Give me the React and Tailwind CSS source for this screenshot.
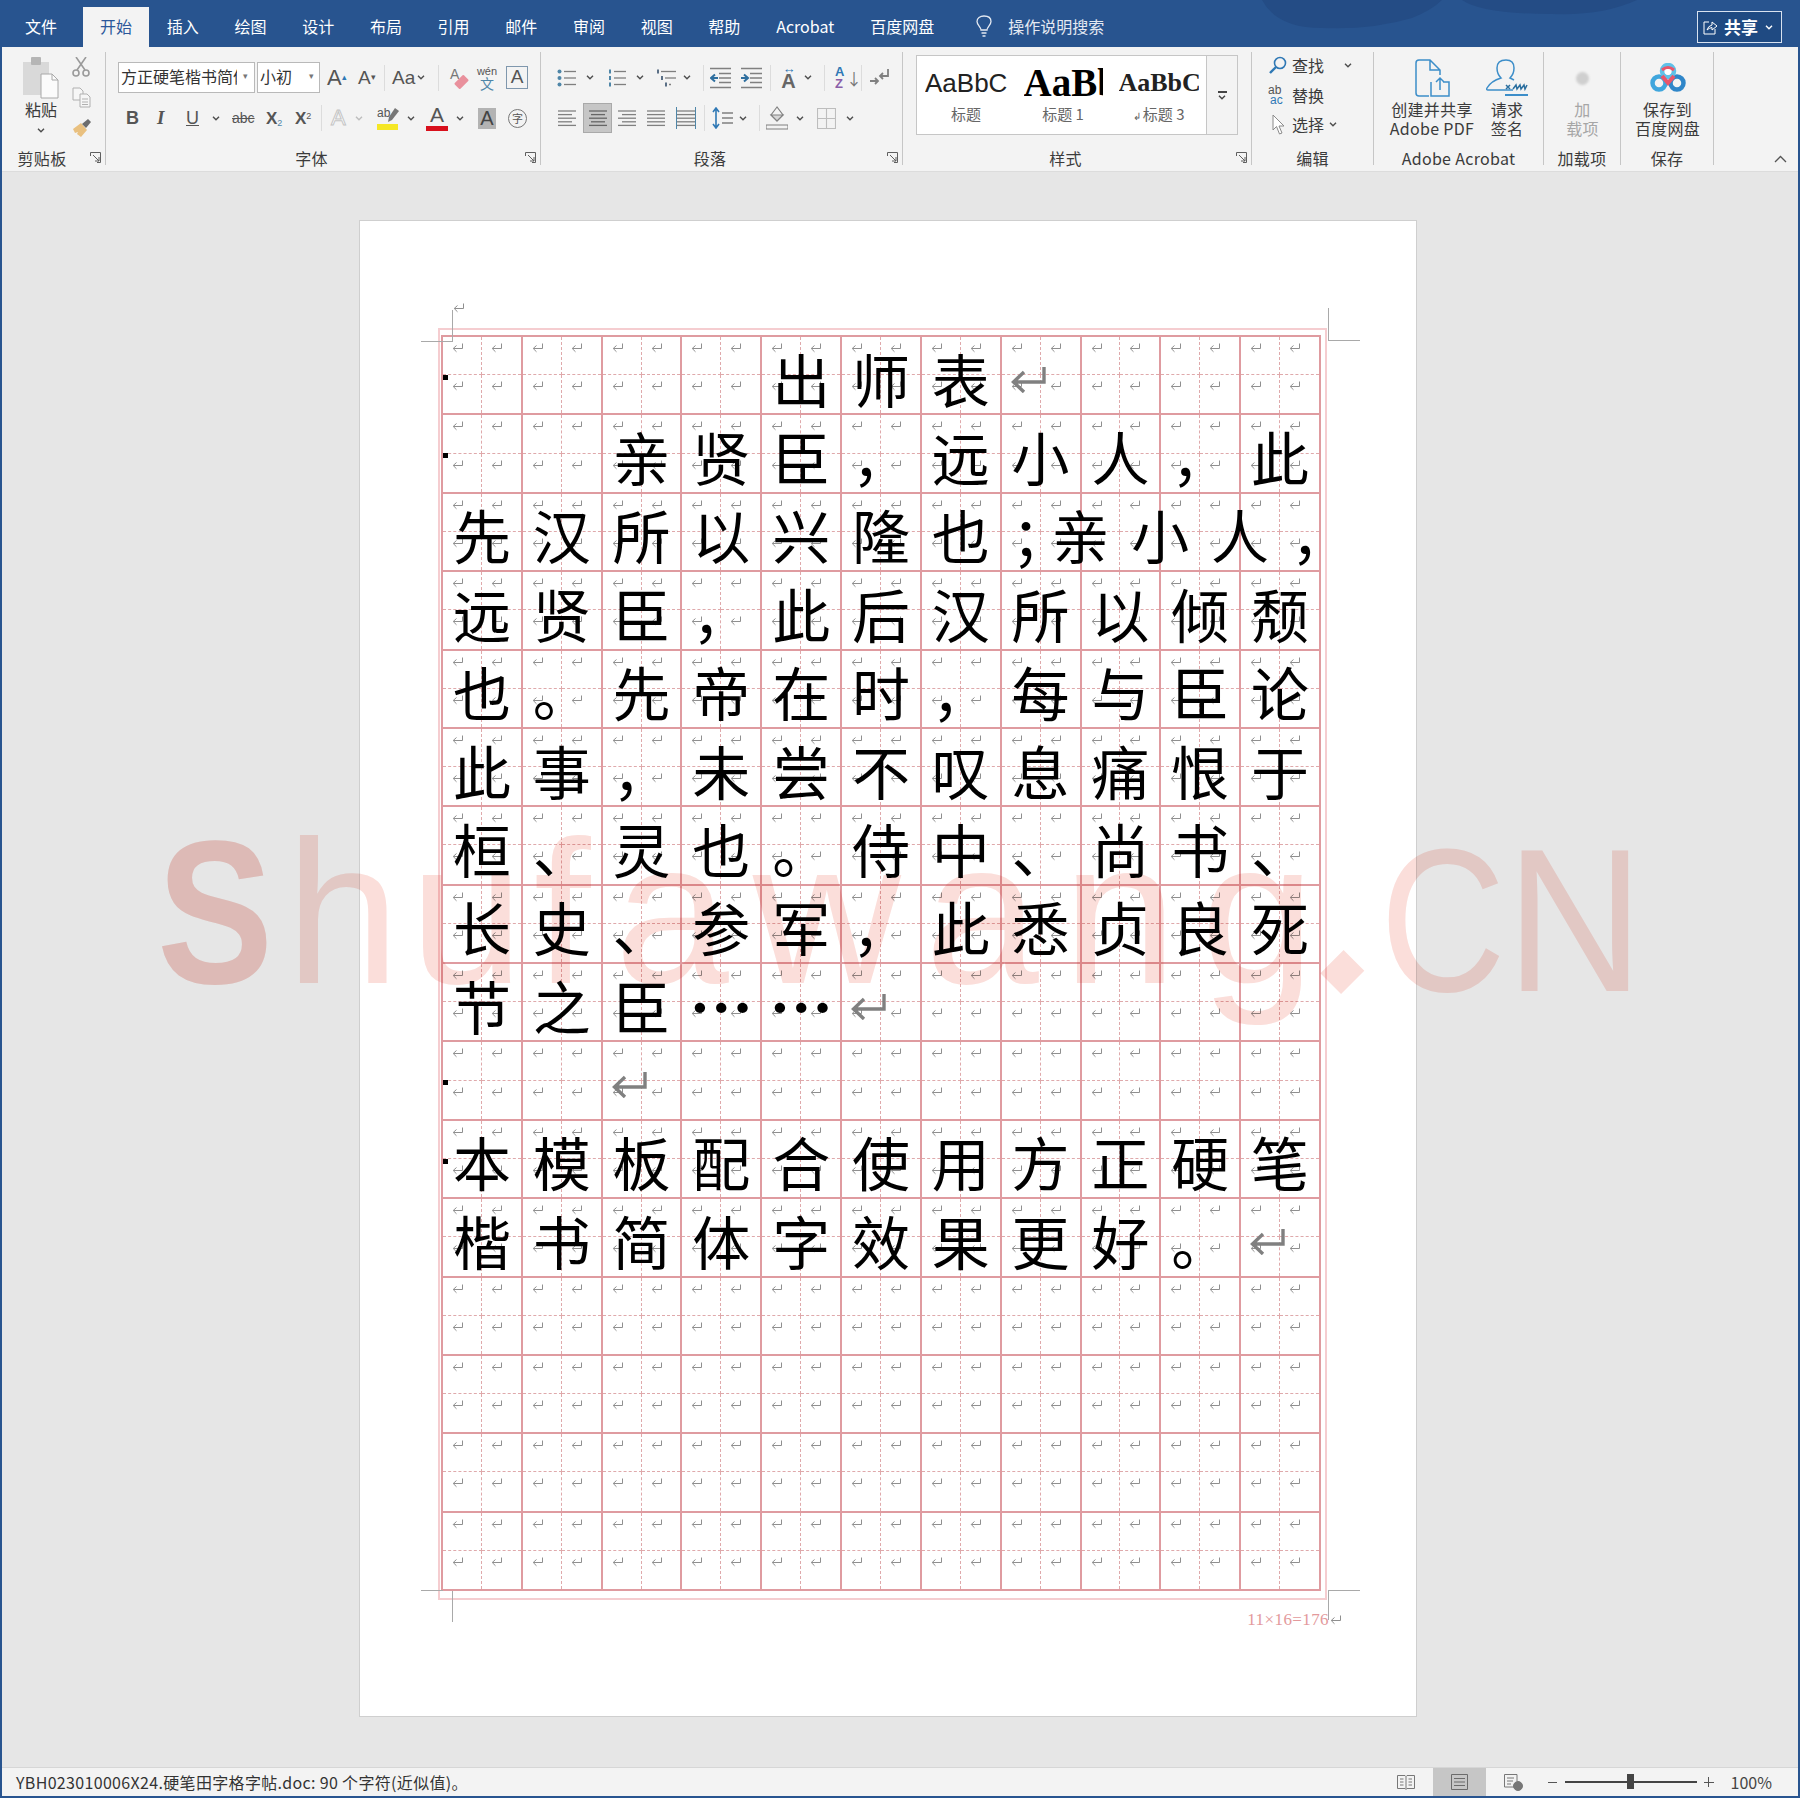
import React from "react";

const UI_FONT = "font-['Noto_Sans_CJK_SC','Noto_Sans',sans-serif]";

const TABS = [
   ["插入", "w-[67.7px]"],
   ["绘图", "w-[67.7px]"],
   ["设计", "w-[67.7px]"],
   ["布局", "w-[67.7px]"],
   ["引用", "w-[67.7px]"],
   ["邮件", "w-[67.7px]"],
   ["审阅", "w-[67.7px]"],
   ["视图", "w-[67.7px]"],
   ["帮助", "w-[67.7px]"],
   ["Acrobat", "w-[94px]"],
   ["百度网盘", "w-[100px]"],
];

const ROWS = [
   "    出师表↵   ",
   "  亲贤臣，远小人，此",
   "先汉所以兴隆也；亲小人",
   "远贤臣，此后汉所以倾颓",
   "也。先帝在时，每与臣论",
   "此事，未尝不叹息痛恨于",
   "桓、灵也。侍中、尚书、",
   "长史、参军，此悉贞良死",
   "节之臣……↵     ",
   "  ↵        ",
   "本模板配合使用方正硬笔",
   "楷书简体字效果更好。↵",
   "           ",
   "           ",
   "           ",
   "           ",
];

const MARKED_ROWS = [0, 1, 9, 10];

function Ret({ className = "" }) {
   return (
      <svg viewBox="0 0 12 10" className={`h-[10px] w-[12px] ${className}`} fill="none" stroke="#8f8f8f" strokeWidth="1">
         <path d="M10.5 .5V5.5H1.5M4.5 2.5 1.2 5.5 4.5 8.8" />
      </svg>
   );
}

function BigRet() {
   return (
      <svg viewBox="0 0 37 27" className="absolute left-[8px] top-[29px] z-20 h-[27px] w-[37px]" fill="none" stroke="#808080" strokeWidth="3.4">
         <path d="M34 1V16H4M14 6 3.5 16 14 26" />
      </svg>
   );
}

function Cell({ text, row, col }) {
   const shifted = row === 2 && col >= 8;
   return (
      <div className="relative grid grid-cols-2 grid-rows-2 border-r-2 border-b-2 border-[#df9ba0]">
         <div className="border-r border-b border-dashed border-[#dfa9ab] pl-[9px] pt-[6px]"><Ret /></div>
         <div className="border-b border-dashed border-[#dfa9ab] pl-[9px] pt-[6px]"><Ret /></div>
         <div className="border-r border-dashed border-[#dfa9ab] pl-[9px] pt-[6px]"><Ret /></div>
         <div className="pl-[9px] pt-[6px]"><Ret /></div>
         {col === 0 && MARKED_ROWS.includes(row) && <span className="absolute left-0 top-[38px] h-[5px] w-[5px] bg-black" />}
         {text === "↵" ? (
            <BigRet />
         ) : text === "…" ? (
            <span className="absolute inset-0 z-10 flex items-center justify-center pt-[4px] text-[64px] font-bold leading-none text-black">…</span>
         ) : text !== " " ? (
            <span className={`absolute inset-0 z-10 flex items-center justify-center pt-[5px] text-[58px] leading-none text-black ${shifted ? "-translate-x-10" : ""}`}>
               {text}
            </span>
         ) : null}
         {row === 2 && col === 10 && (
            <span className="absolute inset-0 z-10 flex translate-x-10 items-center justify-center pt-[5px] text-[58px] leading-none text-black">，</span>
         )}
      </div>
   );
}

function Chev({ className = "", color = "#4d4d4d" }) {
   return (
      <svg viewBox="0 0 8 5" className={`h-[5px] w-[8px] shrink-0 ${className}`} fill="none" stroke={color} strokeWidth="1.4">
         <path d="M1 .8 4 3.8 7 .8" />
      </svg>
   );
}

function Sep({ className = "" }) {
   return <span className={`h-[26px] w-px shrink-0 bg-[#dcdcdc] ${className}`} />;
}

function Launcher() {
   return (
      <svg viewBox="0 0 11 11" className="absolute right-[4px] top-[3px] h-[11px] w-[11px]" fill="none" stroke="#5f5f5f" strokeWidth="1">
         <path d="M.5 4V.5H10.5V10.5H7M3 3 9 9M9 5V9H5" />
      </svg>
   );
}

function Group({ label, launcher, width, children }) {
   return (
      <section className={`flex shrink-0 flex-col border-r border-[#c6c6c6] ${width}`}>
         <div className="h-[98px]">{children}</div>
         <div className={`relative h-[16px] text-center text-[16px] leading-[18px] tracking-[0.3px] text-[#3b3b3b] ${launcher ? "pr-[23px]" : ""}`}>
            {label}
            {launcher && <Launcher />}
         </div>
      </section>
   );
}

// align: 0 left, 1 center, 2 right, 3 both
function AlignLines({ align, className = "", color = "#808080" }) {
   const rows = [16, 12, 16, 12, 16];
   return (
      <svg viewBox="0 0 18 17" className={`h-[17px] w-[18px] shrink-0 ${className}`} stroke={color} strokeWidth="1.3">
         {rows.map((w, i) => {
            const len = align === 3 ? 18 : w + 2;
            const x = align === 0 || align === 3 ? 0 : align === 1 ? (18 - len) / 2 : 18 - len;
            return <line key={i} x1={x} x2={x + len} y1={1 + i * 3.6} y2={1 + i * 3.6} />;
         })}
      </svg>
   );
}

function ListIcon({ kind, className = "" }) {
   const ys = [2.5, 9, 15.5];
   return (
      <svg viewBox="0 0 20 18" className={`h-[18px] w-[20px] shrink-0 ${className}`}>
         {ys.map((y, i) => (
            <g key={y}>
               {kind === "bullet" && <circle cx="2.5" cy={y} r="2" fill="#4f86a8" />}
               {kind === "number" && <rect x="2" y={y - 2} width="2" height="4" fill="#4f86a8" />}
               {kind === "multi" && <rect x={i === 0 ? 0 : i === 1 ? 4 : 8} y={y - 2} width="2" height="4" fill="#5a6f86" />}
               <line x1={kind === "multi" ? 4 + i * 4 : 7} x2={kind === "multi" && i === 2 ? 14 : 19} y1={y} y2={y} stroke="#7f7f7f" strokeWidth="1.3" />
            </g>
         ))}
      </svg>
   );
}

function IndentIcon({ flip, className = "" }) {
   return (
      <svg viewBox="0 0 21 22" className={`h-[22px] w-[21px] shrink-0 ${className}`} stroke="#808080" strokeWidth="1.3" fill="none">
         <path d="M0 1.5H21M9 6.5H21M9 11H21M9 15.5H21M0 20.5H21" />
         <path d={flip ? "M0 11H6M3 7.5 7 11 3 14.5" : "M8 11H2M5 7.5 1 11 5 14.5"} stroke="#2f6f9f" strokeWidth="2" />
      </svg>
   );
}

function ClipboardIcon() {
   return (
      <svg viewBox="0 0 36 42" className="h-[42px] w-[36px]">
         <rect x="0" y="5" width="26" height="33" fill="#d9d9d9" />
         <rect x="8" y="0" width="10" height="8" rx="1" fill="#b5b5b5" />
         <path d="M18 17H29L35 23V41H18Z" fill="#fbfbfb" stroke="#a8a8a8" strokeWidth="1" />
         <path d="M29 17V23H35" fill="none" stroke="#a8a8a8" strokeWidth="1" />
      </svg>
   );
}

function CutIcon() {
   return (
      <svg viewBox="0 0 18 20" className="h-[20px] w-[18px]" fill="none" stroke="#9a9a9a" strokeWidth="1.6">
         <path d="M4 0 13 13M14 0 5 13" />
         <circle cx="4" cy="16" r="3" />
         <circle cx="14" cy="16" r="3" />
      </svg>
   );
}

function CopyIcon() {
   return (
      <svg viewBox="0 0 19 21" className="h-[21px] w-[19px]" fill="#f6f6f6" stroke="#b0b0b0" strokeWidth="1">
         <path d="M1 1H8L11 4V13H1Z" />
         <path d="M8 7H15L18 10V20H8Z" />
         <path d="M10 12H16M10 15H16M10 17.5H16" />
      </svg>
   );
}

function PainterIcon() {
   return (
      <svg viewBox="0 0 20 20" className="h-[20px] w-[20px]">
         <path d="M1 11 9 5 15 12 9 19 5 16 6 14 3 15Z" fill="#e9c07f" />
         <path d="M10 6 16 1 19 4 14 10Z" fill="#6d6d6d" />
      </svg>
   );
}

function FindIcon() {
   return (
      <svg viewBox="0 0 18 18" className="h-[18px] w-[18px]" fill="none" stroke="#2f78b5" strokeWidth="1.6">
         <circle cx="11" cy="7" r="5.5" />
         <path d="M7 11 1 17" strokeWidth="2.4" />
      </svg>
   );
}

function PdfIcon() {
   return (
      <svg viewBox="0 0 35 39" className="h-[39px] w-[35px]" fill="none" stroke="#3d8ec9" strokeWidth="1.5">
         <path d="M14 37H4Q1 37 1 34V4Q1 1 4 1H15L25 11V16M15 1V11H25" />
         <path d="M16 23V37H34V23H28M25 31V19M21 23 25 19 29 23" />
      </svg>
   );
}

function SignIcon() {
   return (
      <svg viewBox="0 0 42 38" className="h-[38px] w-[42px]" fill="none" stroke="#3d8ec9" strokeWidth="1.5">
         <path d="M27 31H2Q0 31 1 29 5 22 15 19 11 15 11 9 11 1 20 1 28 1 28 9 28 15 24 19 26 20 28 21" />
         <path d="M20 26 24 30M24 26 20 30" stroke="#2b6f9f" />
         <path d="M27 30 30 26 31 30 34 26 35 30 38 26 39 30 41 26" stroke="#2b6f9f" />
         <path d="M19 36H42" strokeWidth="2" />
      </svg>
   );
}

function BaiduIcon() {
   return (
      <svg viewBox="0 0 36 30" className="h-[30px] w-[36px]" fill="none">
         <circle cx="9" cy="20" r="6.5" stroke="#3fa6dd" strokeWidth="4.5" />
         <circle cx="27" cy="20" r="6.5" stroke="#2f86c9" strokeWidth="4.5" />
         <circle cx="18" cy="8" r="6" stroke="#5fc1e8" strokeWidth="4.5" />
         <path d="M12 13 18 20 24 13" stroke="#e9566b" strokeWidth="4" />
         <path d="M12 7Q18 2 24 7" stroke="#e9566b" strokeWidth="3" />
         <circle cx="18" cy="9" r="3" fill="#fff" />
      </svg>
   );
}

function TitleBar() {
   return (
      <header className="relative flex h-[47px] shrink-0 items-end overflow-hidden bg-[#28548f] text-[16px] text-white">
         <svg viewBox="0 0 400 30" className="absolute left-[1250px] top-0 h-[30px] w-[400px]" fill="#244c85">
            <path d="M10 0Q25 28 70 28 120 30 160 18 180 10 190 0ZM210 0Q230 14 300 14 350 16 385 0Z" />
         </svg>
         <span className="ml-[5px] flex h-[40px] w-[68px] items-center justify-center pb-[3px]">文件</span>
         <span className="ml-[8px] flex h-[40px] w-[66px] items-center justify-center bg-[#f3f3f3] pb-[3px] text-[#2b579a]">开始</span>
         {TABS.map(([name, width]) => (
            <span key={name} className={`flex h-[40px] items-center justify-center pb-[3px] ${width}`}>
               {name}
            </span>
         ))}
         <span className="ml-[24px] flex h-[40px] items-center gap-[16px] pb-[3px] text-[#e4e9f2]">
            <svg viewBox="0 0 16 22" className="h-[22px] w-[16px]" fill="none" stroke="currentColor" strokeWidth="1.3">
               <path d="M5 15C5 12 1 10 1 6.5 1 3 4 1 8 1S15 3 15 6.5C15 10 11 12 11 15ZM5.5 18H10.5M6.5 21H9.5" />
            </svg>
            操作说明搜索
         </span>
         <span className="absolute right-[16px] top-[11px] flex h-[32px] w-[85px] items-center border border-[#d8e2f0] bg-[#1f4a82] pl-[5px] text-[17px] font-bold">
            <svg viewBox="0 0 15 15" className="mr-[6px] h-[15px] w-[15px]" fill="none" stroke="#fff" strokeWidth="1">
               <path d="M6 2H1V14H12V9M4 10Q5 6 9 5V2L14 6 9 10V7.5Q6 8 4 10Z" />
            </svg>
            共享
            <Chev className="ml-[7px]" color="#fff" />
         </span>
      </header>
   );
}

function ClipboardGroup() {
   return (
      <Group label="剪贴板" launcher width="w-[104px]">
         <div className="flex pl-[19px] pt-[5px]">
            <div className="flex w-[40px] flex-col items-center">
               <ClipboardIcon />
               <span className="mt-0 text-[16px] leading-[20px] text-[#3b3b3b]">粘贴</span>
               <Chev className="mt-[9px]" />
            </div>
            <div className="ml-[11px] flex flex-col gap-[10px]">
               <CutIcon />
               <CopyIcon />
               <PainterIcon />
            </div>
         </div>
      </Group>
   );
}

function FontGroup() {
   return (
      <Group label="字体" launcher width="w-[435px]">
         <div className="flex flex-col gap-[10px] pt-[10px] font-['Liberation_Sans',sans-serif] text-[#555]">
            <div className="flex h-[31px] items-center">
               <span className={`ml-[12px] flex h-[31px] w-[137px] items-center overflow-hidden border border-[#b9b9b9] bg-white pb-[3px] pl-[2px] text-[16px] text-[#333] ${UI_FONT}`}>
                  <span className="w-[116px] shrink-0 overflow-hidden whitespace-nowrap">方正硬笔楷书简体</span>
                  <span className="ml-[6px] text-[9px] text-[#777]">▾</span>
               </span>
               <span className={`ml-[2px] flex h-[31px] w-[63px] items-center justify-between border border-[#b9b9b9] bg-white px-[2px] pb-[3px] pr-[5px] text-[16px] text-[#333] ${UI_FONT}`}>
                  小初
                  <span className="text-[9px] text-[#777]">▾</span>
               </span>
               <span className="ml-[7px] w-[17px] whitespace-nowrap text-[22px] leading-none">A<sup className="text-[9px] text-[#2f78b5]">▴</sup></span>
               <span className="ml-[14px] w-[17px] whitespace-nowrap text-[19px] leading-none">A<sup className="text-[9px] text-[#555]">▾</sup></span>
               <Sep className="ml-[9px]" />
               <span className="ml-[7px] w-[21px] whitespace-nowrap text-[19px] leading-none">Aa</span>
               <Chev className="ml-[4px]" />
               <Sep className="ml-[13px]" />
               <span className="relative ml-[11px] h-[22px] w-[18px] text-[14px] leading-[14px] text-[#777]">
                  A
                  <span className="absolute bottom-[3px] right-0 h-[8px] w-[13px] -rotate-45 rounded-[1px] bg-[#e9909c]" />
               </span>
               <span className="ml-[10px] flex w-[18px] flex-col items-center text-[11px] leading-[10px] text-[#555]">
                  wén
                  <span className={`mt-[1px] text-[14px] leading-[13px] text-[#4f86a8] ${UI_FONT}`}>文</span>
               </span>
               <span className="ml-[10px] flex h-[23px] w-[22px] items-center justify-center border border-[#7f97ad] text-[19px] text-[#555]">A</span>
            </div>
            <div className="flex h-[30px] items-center">
               <span className="ml-[20px] w-[11px] text-[18px] font-bold">B</span>
               <span className="ml-[20px] w-[9px] font-['Liberation_Serif',serif] text-[19px] font-bold italic">I</span>
               <span className="ml-[20px] w-[12px] text-[18px] underline">U</span>
               <Chev className="ml-[14px]" />
               <span className="ml-[12px] w-[21px] text-[14px] line-through">abc</span>
               <span className="ml-[13px] w-[16px] whitespace-nowrap text-[17px] font-bold leading-none">X<sub className="text-[9px] font-normal text-[#4f86a8]">2</sub></span>
               <span className="ml-[13px] w-[17px] whitespace-nowrap text-[17px] font-bold leading-none">X<sup className="text-[9px] font-normal">2</sup></span>
               <Sep className="ml-[9px]" />
               <span className="ml-[9px] w-[16px] text-[22px] leading-none text-white [-webkit-text-stroke:1px_#c4c4c4]">A</span>
               <Chev className="ml-[8px]" color="#bdbdbd" />
               <span className="relative ml-[14px] flex w-[21px] flex-col items-start text-[12px] leading-[13px]">
                  ab
                  <span className="mt-[4px] h-[6px] w-[21px] bg-[#f5e725]" />
                  <svg viewBox="0 0 11 14" className="absolute left-[11px] top-[1px] h-[14px] w-[11px]">
                     <path d="M7 0 11 3 4 12 0 14 1 9Z" fill="#777" />
                  </svg>
               </span>
               <Chev className="ml-[9px]" />
               <span className="ml-[11px] flex w-[22px] flex-col items-center text-[21px] leading-[18px]">
                  A
                  <span className="mt-[2px] h-[5px] w-[22px] bg-[#d8101c]" />
               </span>
               <Chev className="ml-[8px]" />
               <span className="ml-[14px] flex h-[21px] w-[18px] items-center justify-center bg-[#b3b3b3] text-[20px] text-[#444]">A</span>
               <span className={`ml-[12px] flex h-[19px] w-[19px] items-center justify-center rounded-full border border-[#777] text-[11px] ${UI_FONT}`}>字</span>
            </div>
         </div>
      </Group>
   );
}

function ParagraphGroup() {
   return (
      <Group label="段落" launcher width="w-[362px]">
         <div className="flex flex-col gap-[10px] pt-[10px]">
            <div className="flex h-[31px] items-center">
               <ListIcon kind="bullet" className="ml-[16px]" />
               <Chev className="ml-[9px]" />
               <ListIcon kind="number" className="ml-[13px]" />
               <Chev className="ml-[9px]" />
               <ListIcon kind="multi" className="ml-[13px]" />
               <Chev className="ml-[6px]" />
               <Sep className="ml-[12px]" />
               <IndentIcon className="ml-[6px]" />
               <IndentIcon flip className="ml-[10px]" />
               <Sep className="ml-[8px]" />
               <span className="ml-[6px] flex w-[23px] flex-col items-center font-['Liberation_Sans',sans-serif] text-[20px] font-bold leading-[18px] text-[#666]">
                  <span className="text-[13px] leading-[6px] tracking-[-1px] text-[#2f78b5]">↔</span>
                  A
               </span>
               <Chev className="ml-[4px]" />
               <Sep className="ml-[12px]" />
               <span className="ml-[10px] flex w-[11px] flex-col font-['Liberation_Sans',sans-serif] text-[13px] font-bold leading-[12px]">
                  <span className="text-[#2f78b5]">A</span>
                  <span className="text-[#8a5ea8]">Z</span>
               </span>
               <span className="w-[6px] text-[#777]">↓</span>
               <Sep className="ml-[9px]" />
               <svg viewBox="0 0 20 20" className="ml-[7px] h-[20px] w-[20px]" fill="none" stroke="#808080" strokeWidth="1.8">
                  <path d="M19 1V8H11M14 5 11 8 14 11M1 13H9M6 10 9 13 6 16" />
               </svg>
            </div>
            <div className="flex h-[30px] items-center">
               <AlignLines align={0} className="ml-[17px]" />
               <span className="ml-[7px] flex h-[30px] w-[29px] items-center justify-center border border-[#a9a9a9] bg-[#c6c6c6]">
                  <AlignLines align={1} color="#666" />
               </span>
               <AlignLines align={2} className="ml-[6px]" />
               <AlignLines align={3} className="ml-[11px]" />
               <span className="relative ml-[11px] flex h-[22px] w-[20px] items-center justify-center border-x border-[#4f86a8]">
                  <AlignLines align={3} />
               </span>
               <Sep className="ml-[8px]" />
               <svg viewBox="0 0 21 22" className="ml-[7px] h-[22px] w-[21px]" fill="none" stroke="#808080" strokeWidth="1.3">
                  <path d="M4 1V21M1 5 4 1 7 5M1 17 4 21 7 17" stroke="#2f78b5" strokeWidth="1.6" />
                  <path d="M10 6H21M10 11H21M10 16H21" />
               </svg>
               <Chev className="ml-[6px]" />
               <Sep className="ml-[12px]" />
               <svg viewBox="0 0 22 24" className="ml-[6px] h-[24px] w-[22px]" fill="none" stroke="#808080" strokeWidth="1.1">
                  <path d="M11 1 5 9 11 15 17 9ZM0 19H22V23H0Z" />
                  <path d="M5 9H17L11 15Z" fill="#d6d6d6" />
               </svg>
               <Chev className="ml-[8px]" />
               <svg viewBox="0 0 19 21" className="ml-[13px] h-[21px] w-[19px]" fill="none" stroke="#bdbdbd" strokeWidth="1.1">
                  <path d="M.5.5H18.5V20.5H.5ZM9.5.5V20.5M.5 10.5H18.5" />
               </svg>
               <Chev className="ml-[10px]" />
            </div>
         </div>
      </Group>
   );
}

function StylesGroup() {
   return (
      <Group label="样式" launcher width="w-[349px]">
         <div className="pl-[13px] pt-[3px]">
            <div className="flex h-[80px] w-[322px] border border-[#c6c6c6] bg-white">
               <div className="flex w-[98px] shrink-0 flex-col items-center overflow-hidden pt-[8px]">
                  <span className="h-[38px] w-[82px] overflow-hidden whitespace-nowrap font-['Liberation_Sans',sans-serif] text-[26px] leading-[38px] text-[#222]">AaBbCc</span>
                  <span className="mt-[2px] text-[15px] leading-[20px] text-[#666]">标题</span>
               </div>
               <div className="flex w-[96px] shrink-0 flex-col items-center overflow-hidden pt-[8px]">
                  <span className="h-[38px] w-[79px] overflow-hidden whitespace-nowrap font-['Liberation_Serif',serif] text-[39px] font-bold leading-[38px] text-black">AaBbC</span>
                  <span className="mt-[2px] text-[15px] leading-[20px] text-[#666]">标题 1</span>
               </div>
               <div className="flex w-[95px] shrink-0 flex-col items-center overflow-hidden pt-[8px]">
                  <span className="h-[38px] w-[80px] overflow-hidden whitespace-nowrap font-['Liberation_Serif',serif] text-[26px] font-bold leading-[38px] text-[#222]">AaBbCc</span>
                  <span className="mt-[2px] text-[15px] leading-[20px] text-[#666]"><span className="text-[10px]">↲ </span>标题 3</span>
               </div>
               <div className="flex flex-1 flex-col items-center justify-center border-l border-[#c6c6c6] bg-[#f3f3f3]">
                  <span className="h-[2px] w-[9px] bg-[#444]" />
                  <Chev className="mt-[2px]" color="#444" />
               </div>
            </div>
         </div>
      </Group>
   );
}

function EditGroup() {
   return (
      <Group label="编辑" width="w-[122px]">
         <div className="flex flex-col text-[16px] text-[#3b3b3b]">
            <div className="flex h-[26px] items-center pl-[17px]">
               <FindIcon />
               <span className="ml-[5px]">查找</span>
               <Chev className="ml-[20px]" />
            </div>
            <div className="flex h-[30px] items-center pl-[16px] pt-[3px]">
               <span className="flex w-[20px] flex-col font-['Liberation_Sans',sans-serif] text-[12px] leading-[10px] text-[#555]">
                  ab
                  <span className="pl-[2px] text-[#2f78b5]">ac</span>
               </span>
               <span className="ml-[4px]">替换</span>
            </div>
            <div className="flex h-[32px] items-center pl-[20px]">
               <svg viewBox="0 0 13 21" className="h-[21px] w-[13px]" fill="#fff" stroke="#8a8a8a" strokeWidth="1">
                  <path d="M1 1V16L4.5 12.5 7.5 20 10 19 7 12H12Z" />
               </svg>
               <span className="ml-[7px]">选择</span>
               <Chev className="ml-[5px]" />
            </div>
         </div>
      </Group>
   );
}

function BigAction({ icon, lines, width, muted }) {
   return (
      <div className={`flex shrink-0 flex-col items-center pt-[7px] ${width}`}>
         <div className="flex h-[38px] items-center justify-center">{icon}</div>
         <div className={`mt-[3px] whitespace-nowrap text-center text-[16px] leading-[19px] tracking-[0.3px] ${muted ? "text-[#a6a6a6]" : "text-[#3b3b3b]"}`}>
            {lines.map((line) => (
               <div key={line}>{line}</div>
            ))}
         </div>
      </div>
   );
}

function Ribbon() {
   return (
      <div className="flex h-[125px] shrink-0 border-b border-[#dcdcdc] bg-[#f3f3f3] pb-[6px] pt-[5px]">
         <ClipboardGroup />
         <FontGroup />
         <ParagraphGroup />
         <StylesGroup />
         <EditGroup />
         <Group label="Adobe Acrobat" width="w-[170px]">
            <div className="flex pl-[4px]">
               <BigAction width="w-[108px]" icon={<PdfIcon />} lines={["创建并共享", "Adobe PDF"]} />
               <BigAction width="w-[42px]" icon={<SignIcon />} lines={["请求", "签名"]} />
            </div>
         </Group>
         <Group label="加载项" width="w-[77px]">
            <BigAction
               width="w-[77px]"
               muted
               icon={<span className="h-[13px] w-[13px] rounded-full bg-[#cfcfcf] blur-[1px]" />}
               lines={["加", "载项"]}
            />
         </Group>
         <Group label="保存" width="w-[93px]">
            <BigAction width="w-[93px]" icon={<BaiduIcon />} lines={["保存到", "百度网盘"]} />
         </Group>
         <div className="flex flex-1 items-end justify-end pb-[2px] pr-[11px]">
            <svg viewBox="0 0 13 8" className="h-[8px] w-[13px]" fill="none" stroke="#555" strokeWidth="1.3">
               <path d="M1 7 6.5 1.5 12 7" />
            </svg>
         </div>
      </div>
   );
}

function CropMark({ className }) {
   return <span className={`absolute bg-[#a9a9a9] ${className}`} />;
}

function Page() {
   return (
      <div className="relative h-[1497px] w-[1058px] border border-[#cfcfcf] bg-white pl-[78px] pt-[107px]">
         <Ret className="absolute left-[93px] top-[82px]" />
         <CropMark className="left-[61px] top-[120px] h-px w-[31px]" />
         <CropMark className="left-[92px] top-[89px] h-[32px] w-px" />
         <CropMark className="left-[968px] top-[119px] h-px w-[32px]" />
         <CropMark className="left-[968px] top-[87px] h-[32px] w-px" />
         <CropMark className="left-[61px] top-[1369px] h-px w-[32px]" />
         <CropMark className="left-[92px] top-[1369px] h-[32px] w-px" />
         <CropMark className="left-[968px] top-[1369px] h-px w-[32px]" />
         <CropMark className="left-[968px] top-[1369px] h-[30px] w-px" />

         <div className="h-[1272px] w-[889px] border-2 border-[#f5cdd0] pl-[1px] pt-[5px]">
            <div className="grid h-[1256px] w-[880px] grid-cols-11 grid-rows-16 border-l-2 border-t-2 border-[#df9ba0]">
               {ROWS.flatMap((line, row) =>
                  Array.from(line).map((ch, col) => <Cell key={`${row}-${col}`} text={ch} row={row} col={col} />),
               )}
            </div>
         </div>
         <div className="mt-[10px] flex w-[904px] items-center justify-end font-['Liberation_Serif',serif] text-[17px] leading-[20px] tracking-[0.4px] text-[#e39a9c]">
            11×16=176
            <Ret className="ml-[1px]" />
         </div>
      </div>
   );
}

function StatusBar() {
   return (
      <footer className="flex h-[29px] shrink-0 items-center border-t border-[#d6d6d6] bg-[#f3f3f3] pl-[14px] text-[#333]">
         <span className="flex-1 whitespace-nowrap text-[16px] tracking-[0.33px]">YBH023010006X24.硬笔田字格字帖.doc: 90 个字符(近似值)。</span>
         <svg viewBox="0 0 18 16" className="h-[16px] w-[18px]" fill="none" stroke="#777" strokeWidth="1">
            <path d="M.5 1.5H8L9 2.5 10 1.5H17.5V14.5H10L9 15.5 8 14.5H.5ZM9 2.5V15M3 5H6.5M3 8H6.5M3 11H6.5M11.5 5H15M11.5 8H15M11.5 11H15" />
         </svg>
         <span className="ml-[18px] flex h-[28px] w-[53px] items-center justify-center bg-[#c6c6c6]">
            <svg viewBox="0 0 17 16" className="h-[16px] w-[17px]" fill="none" stroke="#6b6b6b" strokeWidth="1">
               <path d="M.5.5H16.5V15.5H.5ZM3 4.5H14M3 8H14M3 11.5H14" />
            </svg>
         </span>
         <svg viewBox="0 0 19 17" className="ml-[18px] h-[17px] w-[19px]" fill="none" stroke="#777" strokeWidth="1">
            <path d="M11 13H.5V.5H13V7M3 4H10M3 7H9M3 10H7" />
            <circle cx="14" cy="12" r="4.5" fill="#777" />
         </svg>
         <span className="ml-[25px] h-px w-[9px] bg-[#555]" />
         <span className="relative ml-[8px] h-[2px] w-[132px] bg-[#444]">
            <span className="absolute left-[62px] top-[-7px] h-[15px] w-[7px] bg-[#444]" />
         </span>
         <span className="relative ml-[7px] h-px w-[10px] bg-[#555]">
            <span className="absolute left-[4.5px] top-[-5px] h-[10px] w-px bg-[#555]" />
         </span>
         <span className="ml-[17px] mr-[26px] text-[16px] text-[#444]">100%</span>
      </footer>
   );
}

export default function App() {
   return (
      <div className={`relative flex h-[1798px] w-full flex-col overflow-hidden border-x-2 border-b-2 border-[#28548f] bg-[#e6e6e6] ${UI_FONT}`}>
         <TitleBar />
         <Ribbon />
         <main className="min-h-0 flex-1 pl-[357px] pt-[48px]">
            <Page />
         </main>
         <StatusBar />
         <div className="pointer-events-none absolute left-[155px] top-[809px] z-30 whitespace-nowrap font-['Liberation_Sans',sans-serif] text-[205px] leading-none text-[#fbdeda] mix-blend-multiply">
            <span className="-mr-[8px] inline-block origin-left scale-x-85 font-bold text-[#f5cfca]">S</span>
            <span className="tracking-[10px]">hu</span>
            <span className="tracking-[24px]">fawan</span>
            g
            <span className="mr-[8px] inline-block origin-[50%_79%] rotate-45 scale-150">.</span>
            <span className="-mr-[22px] inline-block origin-left translate-y-2 scale-x-85">C</span>
            <span className="inline-block origin-left translate-y-2 scale-x-93">N</span>
         </div>
      </div>
   );
}
